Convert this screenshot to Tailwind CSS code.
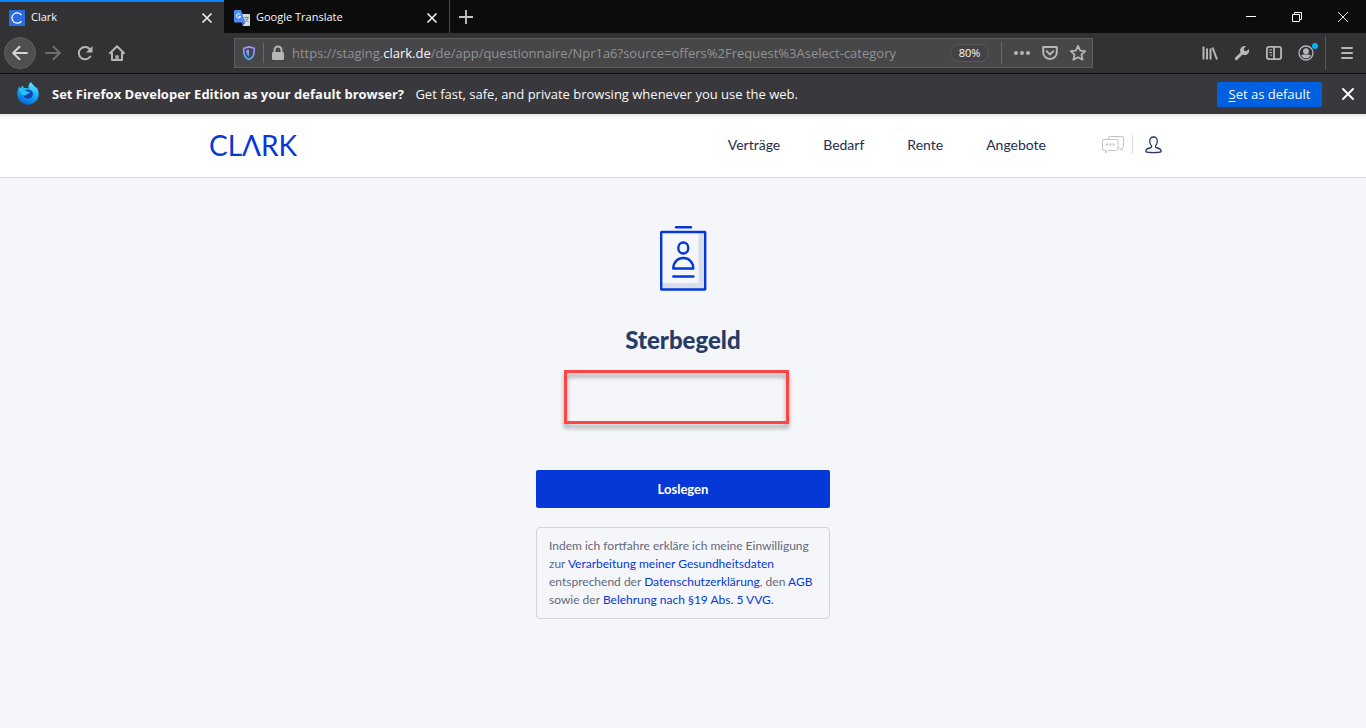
<!DOCTYPE html>
<html lang="de">
<head>
<meta charset="utf-8">
<meta name="viewport" content="width=device-width, initial-scale=1">
<title>Clark</title>
<script src="https://cdn.jsdelivr.net/npm/@tailwindcss/browser@4"></script>
</head>
<body class="flex min-h-screen flex-col bg-[#f4f6fa] font-['Open_Sans','Noto_Sans',sans-serif]">

<!-- Tab strip -->
<div class="flex h-[33px] items-stretch bg-[#0c0c0d] text-[11px] text-[#f9f9fa]">
  <div class="flex w-56 items-center border-t-2 border-[#0a84ff] bg-[#323234] pr-[9px] pl-[9px]">
    <span class="flex size-4 items-center justify-center bg-[#2b6de0]" aria-hidden="true">
      <svg class="size-4" viewBox="0 0 16 16" fill="none" stroke="#fff" stroke-width="1.3"><path d="M12.4 5A5.2 5.2 0 1 0 12.4 11"/></svg>
    </span>
    <span class="ml-1.5 flex-1">Clark</span>
    <button aria-label="Tab schließen" class="flex size-4 items-center justify-center">
      <svg class="size-3" viewBox="0 0 12 12" stroke="#f0f0f0" stroke-width="1.6"><path d="M1.5 1.5l9 9M10.500 1.500l-9 9"/></svg>
    </button>
  </div>
  <div class="flex w-[226px] items-center border-r border-[#4a4a4c] pt-0.5 pr-[9px] pl-2.5">
    <svg class="size-4" viewBox="0 0 16 16" aria-hidden="true">
      <path d="M7 4h8a1 1 0 0 1 1 1v10a1 1 0 0 1-1 1H9z" fill="#d9dcdf"/>
      <path d="M1 0h6l4.500 12.500H1a1 1 0 0 1-1-1V1a1 1 0 0 1 1-1z" fill="#4c8bf5"/>
      <path d="M8.500 16l3-3.500H7.500z" fill="#3061c9"/>
      <path d="M6.300 4.700A2.100 2.100 0 1 0 6.600 6.400H4.700" fill="none" stroke="#fff" stroke-width="1"/>
      <path d="M10.500 7.500h4.500M12.700 6.500v1M14 7.500c-.3 2-1.500 3.500-3 4.500M11.500 8.500c.5 1.500 1.500 2.800 3 3.700" fill="none" stroke="#6d8490" stroke-width=".9"/>
    </svg>
    <span class="ml-1.5 flex-1">Google Translate</span>
    <button aria-label="Tab schließen" class="flex size-4 items-center justify-center">
      <svg class="size-3" viewBox="0 0 12 12" stroke="#f0f0f0" stroke-width="1.6"><path d="M1.500 1.500l9 9M10.500 1.500l-9 9"/></svg>
    </button>
  </div>
  <button aria-label="Neuer Tab" class="flex w-8 items-center justify-center">
    <svg class="size-4" viewBox="0 0 16 16" stroke="#c4c4c5" stroke-width="1.800"><path d="M8 1v14M1 8h14"/></svg>
  </button>
  <div class="ml-auto flex">
    <button aria-label="Minimieren" class="flex w-[46px] items-center justify-center">
      <svg class="size-2.5" viewBox="0 0 10 10" fill="#fff"><path d="M0 4h10v1H0z"/></svg>
    </button>
    <button aria-label="Wiederherstellen" class="flex w-[46px] items-center justify-center">
      <svg class="size-2.5" viewBox="0 0 10 10" fill="none" stroke="#fff"><path d="M.5 2.500h7v7h-7zM2.500 2.500v-2h7v7h-2"/></svg>
    </button>
    <button aria-label="Schließen" class="flex w-[46px] items-center justify-center">
      <svg class="size-2.5" viewBox="0 0 10 10" stroke="#fff" stroke-width=".9"><path d="M0 0l10 10M10 0L0 10"/></svg>
    </button>
  </div>
</div>

<!-- Navigation toolbar -->
<div class="flex h-[41px] items-center border-b border-[#0c0c0d] bg-[#323234] pr-[11px] pl-1 text-[#b6b6b8]">
  <button aria-label="Zurück" class="flex size-8 items-center justify-center rounded-full border border-[#606062] bg-[#4f4f51]">
    <svg class="size-4" viewBox="0 0 16 16" fill="none" stroke="#d5d5d6" stroke-width="2" stroke-linecap="round" stroke-linejoin="round"><path d="M15 8H1.500M7.500 1.700L1.200 8l6.300 6.300"/></svg>
  </button>
  <button aria-label="Vor" disabled class="ml-[9px] flex size-4 items-center justify-center">
    <svg class="size-4" viewBox="0 0 16 16" fill="none" stroke="#6f6f71" stroke-width="2" stroke-linecap="round" stroke-linejoin="round"><path d="M1 8h13.500M8.500 1.700L14.800 8l-6.300 6.300"/></svg>
  </button>
  <button aria-label="Neu laden" class="ml-4 flex size-4 items-center justify-center">
    <svg class="size-4" viewBox="0 0 16 16" fill="none" stroke="currentColor" stroke-width="2" stroke-linecap="round"><path d="M13.300 11.500A6.200 6.200 0 1 1 12.700 4"/><path d="M15.500 1v6.500H9z" fill="currentColor" stroke="none"/></svg>
  </button>
  <button aria-label="Startseite" class="ml-4 flex size-4 items-center justify-center">
    <svg class="size-4" viewBox="0 0 16 16" fill="none" stroke="currentColor" stroke-width="2" stroke-linecap="round" stroke-linejoin="round"><path d="M1 8.200L8 1.200l7 7M3 8v7h10V8"/><path d="M7 15v-4h2v4" stroke-width="1.500"/></svg>
  </button>

  <div class="mx-[109px] flex h-[30px] flex-1 items-center border border-[#5e5e60] bg-[#474749]">
    <button aria-label="Schutz vor Aktivitätenverfolgung" class="flex w-7 items-center justify-center">
      <svg class="size-4" viewBox="0 0 16 16" fill="none">
        <defs><linearGradient id="shield" x1="0" y1="0" x2="0" y2="1"><stop offset="0" stop-color="#b18cff"/><stop offset="1" stop-color="#3fb2ff"/></linearGradient></defs>
        <path d="M8 1.900L13.200 3.300V6c0 4.500-2.200 7.300-5.200 8.500C5 13.300 2.800 10.500 2.800 6V3.300z" stroke="url(#shield)" stroke-width="1.700" stroke-linejoin="round"/>
        <path d="M8 4.500v7.300C6.200 10.500 5.300 8.500 5.300 6V5.200z" fill="url(#shield)"/>
      </svg>
    </button>
    <span class="h-5 w-px bg-[#68686a]"></span>
    <svg class="ml-1.5 size-4" viewBox="0 0 16 16" fill="none" aria-hidden="true"><rect x="2" y="7" width="12" height="8" rx="1.200" fill="#b6b6b8"/><path d="M4.500 7V5a3.500 3.500 0 0 1 7 0v2" stroke="#b6b6b8" stroke-width="2"/></svg>
    <a href="#" class="ml-1.5 pt-0.5 text-[13px] whitespace-nowrap text-[#929294]">https://staging.<span class="text-[#f9f9fa]">clark.de</span>/de/app/questionnaire/Npr1a6?source=offers%2Frequest%3Aselect-category</a>
    <button class="ml-auto h-[18px] w-[39px] rounded-full border border-[#58585a] bg-[#434345] text-[11px] leading-4 text-[#f9f9fa]">80%</button>
    <span class="ml-3 h-[22px] w-px bg-[#68686a]"></span>
    <button aria-label="Seitenaktionen" class="ml-3 size-4"><svg class="size-4" viewBox="0 0 16 16" fill="currentColor"><circle cx="2" cy="8" r="2"/><circle cx="8" cy="8" r="2"/><circle cx="14" cy="8" r="2"/></svg></button>
    <button aria-label="In Pocket speichern" class="ml-3 size-4"><svg class="size-4" viewBox="0 0 16 16" fill="none" stroke="currentColor" stroke-width="2" stroke-linecap="round" stroke-linejoin="round"><path d="M1.200 2h13.600v5.500a6.800 6.500 0 0 1-13.600 0z"/><path d="M4.700 6.300L8 9.400l3.300-3.100"/></svg></button>
    <button aria-label="Lesezeichen" class="mr-1.5 ml-3 size-4"><svg class="size-4" viewBox="0 0 16 16" fill="none" stroke="currentColor" stroke-width="1.800" stroke-linejoin="round"><path d="M8 .9l2.200 4.700 5 .6-3.700 3.400 1 5.100L8 12.200l-4.500 2.500 1-5.100L.8 6.200l5-.6z"/></svg></button>
  </div>

  <button aria-label="Bibliothek" class="size-4"><svg class="size-4" viewBox="0 0 16 16" fill="none" stroke="currentColor" stroke-width="2"><path d="M1.500 1.500v13M5 3.500v11M8.500 3.500v11M10.500 2.500l4.500 12"/></svg></button>
  <button aria-label="Entwicklerwerkzeuge" class="ml-4 size-4"><svg class="size-4" viewBox="0 0 16 16"><path d="M1.300 14.700a1.500 1.500 0 0 1 0-2.100L6.500 7.400A4.500 4.500 0 0 1 12 1.200L9.800 3.600l.4 2.200 2.200.4L14.900 4a4.500 4.500 0 0 1-6.300 5.500l-5.200 5.200a1.500 1.500 0 0 1-2.100 0z" fill="currentColor"/></svg></button>
  <button aria-label="Seitenleiste" class="ml-4 size-4"><svg class="size-4" viewBox="0 0 16 16" fill="none" stroke="currentColor" stroke-width="1.800"><rect x=".9" y="1.900" width="14.200" height="12.200" rx="2"/><path d="M8 2v12"/><path d="M3 5h3M3 7.500h3M4 10h2" stroke-width="1"/></svg></button>
  <button aria-label="Konto" class="relative ml-4 size-4">
    <svg class="size-4" viewBox="0 0 16 16"><circle cx="8" cy="8" r="7" fill="none" stroke="currentColor" stroke-width="1.300"/><circle cx="8" cy="6.200" r="2.900" fill="currentColor"/><path d="M3.200 10.500C4.500 9 5.500 9.500 8 9.500s3.500-.5 4.800 1A5.500 5.500 0 0 1 8 13.300a5.500 5.500 0 0 1-4.800-2.800z" fill="currentColor"/></svg>
    <span class="absolute -top-0.5 -right-1 size-1.5 rounded-full bg-[#00b3f4]"></span>
  </button>
  <span class="ml-[11px] h-[34px] w-px bg-[#5a5a5c]"></span>
  <button aria-label="Menü" class="ml-[13px] size-4"><svg class="size-4" viewBox="0 0 16 16" stroke="currentColor" stroke-width="2" stroke-linecap="round"><path d="M3 3h10M3 8h10M3 13h10"/></svg></button>
</div>

<!-- Default browser notification -->
<div class="flex h-10 items-center bg-[#38383d] pr-2.5 pl-4 text-[#f9f9fa]">
  <svg class="size-6" viewBox="0 0 24 24" aria-hidden="true">
    <defs><linearGradient id="fox" x1=".7" y1="0" x2=".3" y2="1"><stop offset="0" stop-color="#5df0ff"/><stop offset=".5" stop-color="#12a8f5"/><stop offset="1" stop-color="#0a62d8"/></linearGradient></defs>
    <path d="M15 0c1 2 3 3.500 4.500 5.500 1-.3 1.700.5 2 1.500A11 11 0 0 1 22.700 12 10.700 10.700 0 0 1 1.300 12C1.300 9 2 6.500 3.500 4.500l.8 1.700L6.500 3.500 8 6c2 0 3 0 4.500.5C12 4 13 1.500 15 0z" fill="url(#fox)"/>
    <path d="M8 8.500c2-1.500 6-1.500 8 .7 2 2.800.5 7-3.500 7.300-3 .2-5-1.500-5.500-4l3 .3 2-2z" fill="#1a3fa8"/>
    <path d="M3 7c3-1 6 .5 8 2.500 1.500.3 2.500.2 3 .5-.5 1.500-2.500 1.500-3.500 2.500-1 1.500-3 1-4 .3C4.500 11.500 4 9 3 7z" fill="#24c5fb"/>
  </svg>
  <p class="ml-3 flex-1 pt-0.5 text-[13px]"><strong class="mr-2 font-bold">Set Firefox Developer Edition as your default browser?</strong> Get fast, safe, and private browsing whenever you use the web.</p>
  <button class="h-[25px] w-[105px] rounded-xs bg-[#0060df] pt-px text-[13px]"><span class="underline underline-offset-2">S</span>et as default</button>
  <button aria-label="Hinweis schließen" class="ml-[18px] size-4"><svg class="size-4" viewBox="0 0 16 16" stroke="#f9f9fa" stroke-width="2" stroke-linecap="round"><path d="M3 3l10 10M13 3L3 13"/></svg></button>
</div>

<!-- Site header -->
<header class="border-b border-[#d3dbe9] bg-linear-to-b from-[#e9e9e9] from-0% to-white to-[5px] font-['Lato',sans-serif] text-[#1f2d4f]">
  <div class="mx-auto flex h-[63px] max-w-[960px] items-center pr-px pb-0.5 pl-1.5">
    <a href="#" aria-label="CLARK" class="text-[28px] leading-8 font-normal text-[#0538d6]">CLΛRK</a>
    <nav class="ml-auto flex gap-[43px] text-sm">
      <a href="#">Verträge</a>
      <a href="#">Bedarf</a>
      <a href="#">Rente</a>
      <a href="#">Angebote</a>
    </nav>
    <a href="#" aria-label="Nachrichten" class="ml-14">
      <svg class="h-[18px] w-[22px]" viewBox="0 0 22 18" fill="none" stroke="#c2c4c8" stroke-linejoin="round"><path d="M6.500 3.500V2a1.500 1.500 0 0 1 1.500-1.500h12A1.500 1.500 0 0 1 21.500 2v8.500A1.500 1.500 0 0 1 20 12v2.500L17.500 12H16"/><path d="M2 3.500h12.500A1.500 1.500 0 0 1 16 5v8a1.500 1.500 0 0 1-1.500 1.500H6L3.500 17v-2.500H2A1.500 1.500 0 0 1 .5 13V5A1.500 1.500 0 0 1 2 3.500z"/><path d="M4 8.500h2M7.300 8.500h2M10.600 8.500h2" stroke-width="1.800"/></svg>
    </a>
    <span class="mr-3 ml-2 h-[19px] w-px bg-[#d8dce4]"></span>
    <a href="#" aria-label="Profil">
      <svg class="h-[18px] w-[17px]" viewBox="0 0 17 18" fill="none" stroke="#2a3a5e" stroke-width="1.300" stroke-linejoin="round"><path d="M8.500 1C6 1 4.700 2.700 4.700 5c0 2 .6 3.700 1.800 4.800v1.500C5 12.300 1 12 .8 15c0 .5.300 1 1 1.100 4 .6 9.400.6 13.400 0 .7-.1 1-.6 1-1.100-.2-3-4.200-2.700-5.700-3.700V9.800c1.200-1.100 1.800-2.800 1.800-4.800 0-2.300-1.300-4-3.800-4z"/></svg>
    </a>
  </div>
</header>

<!-- Questionnaire intro -->
<main class="relative flex flex-1 flex-col items-center pt-12 font-['Lato',sans-serif]">
  <svg class="h-[66px] w-12" viewBox="0 0 48 66" fill="none" stroke="#0538d6" stroke-width="2.400" stroke-linecap="round" stroke-linejoin="round" aria-hidden="true">
    <path d="M39.500 6.500h6v57h-43v-6.500h37z" fill="#d8deee" stroke="none"/>
    <rect x="2.200" y="6" width="44" height="57.500" rx=".5"/>
    <path d="M17 1.300h15"/>
    <ellipse cx="24.300" cy="22" rx="5" ry="5.500"/>
    <path d="M14.300 42.500c0-6.500 4.500-10.500 10-10.500s10 4 10 10.500z"/>
    <path d="M14.300 50.500h20"/>
  </svg>
  <h1 class="mt-8 text-[24px] leading-8 font-black text-[#263c66]">Sterbegeld</h1>
  <div class="absolute top-48 left-1/2 h-[54px] w-[225px] -translate-x-[119px] border-3 border-[#ff4444] drop-shadow-[0_4px_2px_rgb(0_0_0/0.35)]"></div>
  <button class="mt-[114px] h-[38px] w-[294px] rounded-xs bg-[#0538d6] pt-0.5 text-[13px] font-bold text-white">Loslegen</button>
  <p class="mt-[19px] w-[294px] rounded-sm border border-[#cfd3da] px-3 py-[9px] text-[12px] leading-[18px] text-[#64687a]">Indem ich fortfahre erkläre ich meine Einwilligung zur <a href="#" class="text-[#0538d6]">Verarbeitung meiner Gesundheitsdaten</a> entsprechend der <a href="#" class="text-[#0538d6]">Datenschutzerklärung</a>, den <a href="#" class="text-[#0538d6]">AGB</a> sowie der <a href="#" class="text-[#0538d6]">Belehrung nach §19 Abs. 5 VVG.</a></p>
</main>
</body>
</html>
